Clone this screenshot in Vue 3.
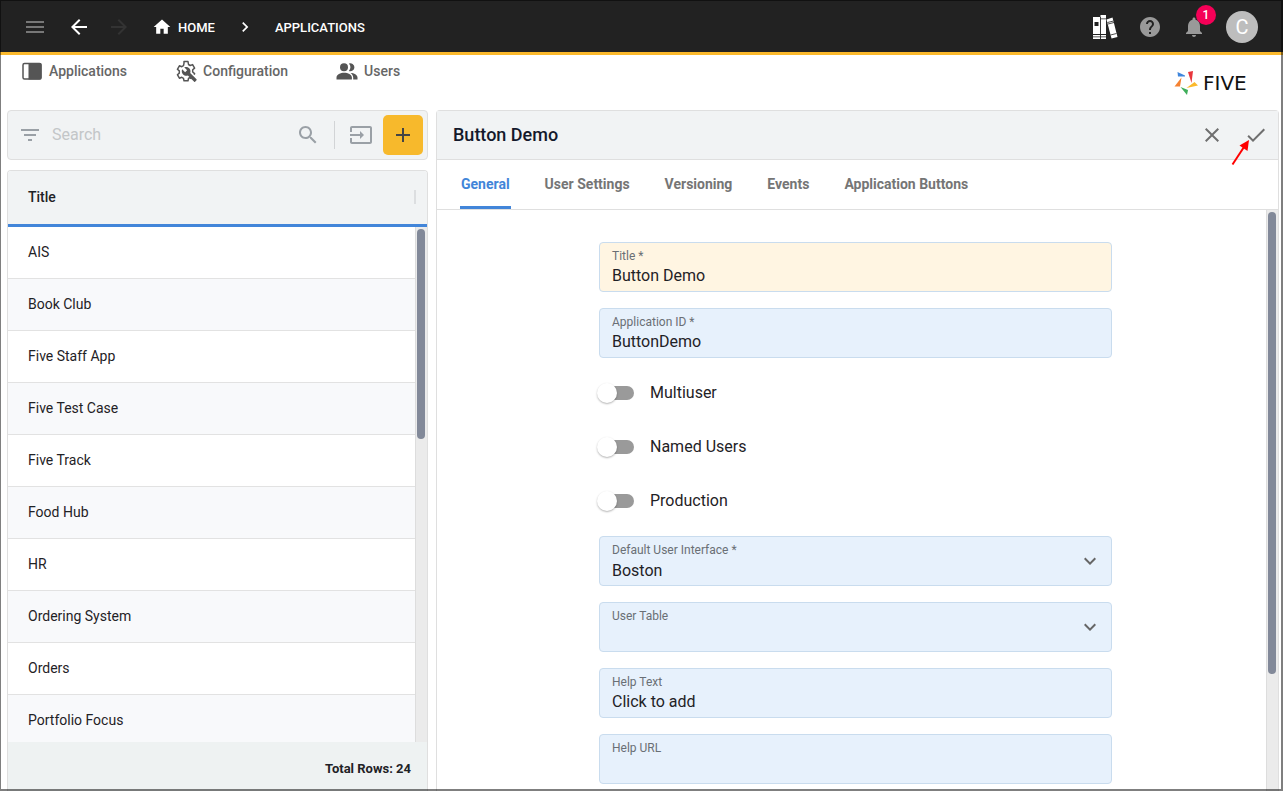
<script setup>
import { ref } from 'vue'

const apps = [
  'AIS', 'Book Club', 'Five Staff App', 'Five Test Case', 'Five Track',
  'Food Hub', 'HR', 'Ordering System', 'Orders', 'Portfolio Focus'
]
const tabs = ['General', 'User Settings', 'Versioning', 'Events', 'Application Buttons']
const activeTab = ref('General')
const search = ref('')

const fields = ref([
  { id: 'title', type: 'text', label: 'Title *', value: 'Button Demo', active: true },
  { id: 'app-id', type: 'text', label: 'Application ID *', value: 'ButtonDemo' },
  { id: 'multiuser', type: 'switch', label: 'Multiuser', value: false },
  { id: 'named-users', type: 'switch', label: 'Named Users', value: false },
  { id: 'production', type: 'switch', label: 'Production', value: false },
  { id: 'default-ui', type: 'select', label: 'Default User Interface *', value: 'Boston', options: ['Boston'] },
  { id: 'user-table', type: 'select', label: 'User Table', value: '', options: [''] },
  { id: 'help-text', type: 'text', label: 'Help Text', value: 'Click to add' },
  { id: 'help-url', type: 'text', label: 'Help URL', value: '' }
])
</script>

<template>
  <div class="app">
    <header class="topbar">
      <button class="icon-btn menu" aria-label="Menu">
        <svg viewBox="0 0 24 24"><path d="M3 18h18v-2H3v2zm0-5h18v-2H3v2zm0-7v2h18V6H3z" /></svg>
      </button>
      <button class="icon-btn back" aria-label="Back">
        <svg viewBox="0 0 24 24"><path d="M20 11H7.830l5.590-5.590L12 4l-8 8 8 8 1.410-1.410L7.830 13H20v-2z" /></svg>
      </button>
      <button class="icon-btn forward" aria-label="Forward" disabled>
        <svg viewBox="0 0 24 24"><path d="M12 4l-1.410 1.410L16.170 11H4v2h12.170l-5.580 5.590L12 20l8-8z" /></svg>
      </button>
      <nav class="crumbs" aria-label="Breadcrumb">
        <a href="#" class="crumb">
          <svg viewBox="0 0 24 24"><path d="M10 20v-6h4v6h5v-8h3L12 3 2 12h3v8z" /></svg>HOME
        </a>
        <svg class="sep" viewBox="0 0 24 24"><path d="M10 6L8.590 7.410 13.170 12l-4.580 4.590L10 18l6-6z" /></svg>
        <a href="#" class="crumb">APPLICATIONS</a>
      </nav>
      <div class="tools">
        <button class="tool" aria-label="Library">
          <svg class="books" viewBox="0 0 26 26">
            <path fill="#fff" d="M1 3h7v22H1zM8.500 1h5.500v24H8.500z" />
            <path fill="#fff" d="M14.500 5.500l6-2L25.500 23l-6 1.500z" />
            <path fill="#222" d="M2.500 8h4v4h-4zM1 20h13v1H1zM1 22.500h13v.8H1zM8 3h.8v22H8zM9 4.500h5v.8H9z" />
            <path stroke="#222" stroke-width=".8" fill="none" d="M15.500 8.500l6-1.500M18.500 21l6-1.500M16 10l6-1.500" />
          </svg>
        </button>
        <button class="tool" aria-label="Help">
          <svg viewBox="0 0 24 24"><path d="M12 2C6.480 2 2 6.480 2 12s4.480 10 10 10 10-4.480 10-10S17.520 2 12 2zm1 17h-2v-2h2v2zm2.070-7.750l-.9.920C13.450 12.900 13 13.500 13 15h-2v-.5c0-1.100.45-2.100 1.170-2.830l1.240-1.260c.37-.36.590-.86.590-1.410 0-1.100-.9-2-2-2s-2 .9-2 2H8c0-2.210 1.790-4 4-4s4 1.790 4 4c0 .88-.36 1.680-.93 2.250z" /></svg>
        </button>
        <button class="tool" aria-label="Notifications">
          <svg viewBox="0 0 24 24"><path d="M12 22c1.100 0 2-.9 2-2h-4c0 1.100.89 2 2 2zm6-6v-5c0-3.070-1.640-5.640-4.500-6.320V4c0-.83-.67-1.500-1.500-1.500s-1.500.67-1.500 1.500v.68C7.630 5.360 6 7.920 6 11v5l-2 2v1h16v-1l-2-2z" /></svg>
          <span class="badge">1</span>
        </button>
        <button class="avatar" aria-label="Account">C</button>
      </div>
    </header>

    <div class="subbar">
      <nav class="sections" aria-label="Sections">
        <a href="#">
          <svg viewBox="0 0 24 24"><rect x="3" y="4.500" width="18" height="15.500" rx="1.500" fill="none" stroke="#555" stroke-width="1.500" /><path d="M8.500 4h11.500a1.500 1.500 0 0 1 1.500 1.500v13.500a1.500 1.500 0 0 1-1.500 1.500H8.500z" /></svg>Applications
        </a>
        <a href="#">
          <svg viewBox="0 0 24 24">
            <path fill="none" stroke="#555" stroke-width="1.500" stroke-linejoin="round" d="M17.500 19.500l-2-.8-1 .6-.5 2.500h-4l-.5-2.500-1.700-1-2.400.9-2-3.500 1.900-1.600v-2.200L3.400 10.300l2-3.500 2.400.9 1.700-1L10 4.200 10 2.500h4l.5 3 1.700 1 2.400-.9 2 3.500-1.900 1.700v2.200l1.900 1.600-.5 1" />
            <path d="M22.500 20.300l-6.300-6.300c.6-1.600.3-3.500-1-4.800-1.400-1.400-3.400-1.600-5-.9l2.900 2.900-2 2-2.900-2.900c-.8 1.600-.5 3.700.9 5.100 1.300 1.300 3.200 1.600 4.800 1l6.300 6.300c.3.300.7.300.9 0l1.400-1.400c.3-.3.300-.7 0-1z" />
          </svg>Configuration
        </a>
        <a href="#">
          <svg viewBox="0 0 24 24"><circle cx="9" cy="8.300" r="4" /><path d="M13.900 4.600a4 4 0 1 1 0 7.400 5.800 5.800 0 0 0 0-7.400zM1.500 20.500v-2c0-3 4-4.700 7.700-4.700s7.700 1.700 7.700 4.700v2zM15.500 13.900c3.600.1 7 1.700 7 4.600v2h-4.300v-2c0-2-1.200-3.600-2.700-4.600z" /></svg>Users
        </a>
      </nav>
      <div class="brand">
        <svg viewBox="0 0 24 24">
          <path fill="#3f86dc" d="M3.500 1L11 4.500v1H4z" />
          <path fill="#e8363c" d="M14 1l5-1-1.500 12z" />
          <path fill="#fbb92c" d="M12.500 17l8-6 3.500 3.500z" />
          <path fill="#3fae5a" d="M6.500 16l7.500 3-1 5z" />
          <path fill="#f58232" d="M7.500 6.500L6 15.500H.500z" />
        </svg>
        <span>FIVE</span>
      </div>
    </div>

    <main class="workspace">
      <aside class="list">
        <div class="searchbar">
          <button class="plain" aria-label="Filter"><svg viewBox="0 0 24 24"><path d="M10 18h4v-2h-4v2zM3 6v2h18V6H3zm3 7h12v-2H6v2z" /></svg></button>
          <input v-model="search" type="text" placeholder="Search" aria-label="Search">
          <button class="plain" aria-label="Run search"><svg viewBox="0 0 24 24"><path d="M15.500 14h-.79l-.28-.27C15.410 12.590 16 11.110 16 9.500 16 5.910 13.090 3 9.500 3S3 5.910 3 9.500 5.910 16 9.500 16c1.610 0 3.090-.59 4.230-1.570l.27.28v.79l5 4.990L20.490 19l-4.990-5zm-6 0C7.010 14 5 11.990 5 9.500S7.010 5 9.500 5 14 7.010 14 9.500 11.990 14 9.500 14z" /></svg></button>
          <span class="divider"></span>
          <button class="plain" aria-label="Import"><svg viewBox="0 0 24 24"><path d="M21 3.010H3c-1.100 0-2 .9-2 2V9h2V4.990h18v14.030H3V15H1v4.010c0 1.100.9 1.980 2 1.980h18c1.100 0 2-.88 2-1.980v-14c0-1.110-.9-2-2-2zM11 16l4-4-4-4v3H1v2h10v3z" /></svg></button>
          <button class="add" aria-label="Add"><svg viewBox="0 0 24 24"><path d="M19 13h-6v6h-2v-6H5v-2h6V5h2v6h6v2z" /></svg></button>
        </div>
        <section class="grid-card">
          <div class="grid-body">
            <table>
              <thead><tr><th scope="col"><div class="head-cell">Title<span class="grip"></span></div></th></tr></thead>
              <tbody><tr v-for="name in apps" :key="name"><td>{{ name }}</td></tr></tbody>
            </table>
            <div class="track list-track"><div class="thumb"></div></div>
          </div>
          <footer>Total Rows: 24</footer>
        </section>
      </aside>

      <section class="detail">
        <div class="detail-head">
          <h1>Button Demo</h1>
          <button class="plain" aria-label="Cancel"><svg viewBox="0 0 24 24"><path d="M19 6.410L17.590 5 12 10.590 6.410 5 5 6.410 10.590 12 5 17.590 6.410 19 12 13.410 17.590 19 19 17.590 13.410 12z" /></svg></button>
          <button class="plain save" aria-label="Save">
            <svg viewBox="0 0 24 24"><path d="M9 16.170L4.830 12l-1.420 1.410L9 19 21 7l-1.410-1.410z" /></svg>
            <svg class="pointer" viewBox="0 0 20 27"><path d="M1.500 25.500L13 8" stroke="#f00" stroke-width="2" fill="none" /><path d="M18 1l-1.500 11L8.500 6.500z" fill="#f00" /></svg>
          </button>
        </div>
        <div class="tabs" role="tablist">
          <button v-for="tab in tabs" :key="tab" role="tab" :aria-selected="tab === activeTab" :class="{ on: tab === activeTab }" @click="activeTab = tab">{{ tab }}</button>
        </div>
        <div class="detail-body">
          <form @submit.prevent>
            <template v-for="f in fields" :key="f.id">
              <div v-if="f.type === 'switch'" class="switch">
                <input :id="f.id" v-model="f.value" type="checkbox" role="switch">
                <label :for="f.id">{{ f.label }}</label>
              </div>
              <div v-else class="field" :class="{ active: f.active }">
                <label :for="f.id">{{ f.label }}</label>
                <input v-if="f.type === 'text'" :id="f.id" v-model="f.value" type="text">
                <template v-else>
                  <select :id="f.id" v-model="f.value"><option v-for="o in f.options" :key="o" :value="o">{{ o }}</option></select>
                  <svg class="caret" viewBox="0 0 24 24"><path d="M7.410 8.590L12 13.170l4.590-4.580L18 10l-6 6-6-6z" /></svg>
                </template>
              </div>
            </template>
          </form>
          <div class="track form-track"><div class="thumb"></div></div>
        </div>
      </section>
    </main>
  </div>
</template>

<style>
body { margin: 0; }
</style>

<style scoped>
* { box-sizing: border-box; }
.app {
  position: relative; display: flex; flex-direction: column;
  height: 100vh; overflow: hidden; background: #fff; color: #1f2226;
  font-family: Roboto, "Liberation Sans", sans-serif; font-size: 14px;
}
.app::after {
  content: ""; position: absolute; inset: 0; pointer-events: none;
  border: 1px solid rgba(0, 0, 0, .5); border-right-width: 2px; border-bottom-width: 2px;
}
button, input, select { font: inherit; color: inherit; margin: 0; padding: 0; border: 0; background: none; outline: 0; }
button { cursor: pointer; }
a { color: inherit; text-decoration: none; }
svg { display: block; width: 24px; height: 24px; fill: currentColor; flex: none; }

.topbar {
  display: flex; align-items: center; flex: none; height: 55px; padding: 2px 26px 0 15px;
  background: #222; border-bottom: 3px solid #fbb92c; color: #fff;
}
.icon-btn { display: grid; place-items: center; width: 40px; height: 40px; }
.menu { color: #777; margin-right: 4px; }
.forward { color: #333; }
.crumbs { display: flex; align-items: center; margin-left: 13px; font-weight: 500; font-size: 13px; }
.crumb { display: flex; align-items: center; gap: 6px; }
.crumb svg { width: 20px; height: 20px; }
.sep { width: 20px; height: 20px; margin: 0 20px; }
.tools { display: flex; align-items: center; gap: 20px; margin-left: auto; color: #999; }
.tool { position: relative; }
.tool .books { width: 26px; height: 26px; }
.badge {
  position: absolute; left: 14px; top: -10px; width: 20px; height: 20px; border-radius: 50%;
  background: #f50057; color: #fff; font-size: 12px; line-height: 20px; font-weight: 500;
}
.avatar { width: 32px; height: 32px; margin-right: -1px; border-radius: 50%; background: #bdbdbd; color: #fff; font-size: 20px; }

.subbar { display: flex; justify-content: space-between; flex: none; height: 55px; padding: 0 20px; }
.sections { display: flex; align-items: center; gap: 47px; height: 32px; color: #666; font-weight: 500; }
.sections a { display: flex; align-items: center; gap: 5px; }
.sections svg { color: #555; }
.brand { display: flex; align-items: center; gap: 5px; height: 55px; color: #111; }
.brand span { min-width: 60px; font-family: "DejaVu Sans", sans-serif; font-size: 20px; }

.workspace { display: flex; flex: 1; min-height: 0; gap: 8px; padding: 0 4px 0 7px; }
.list { display: flex; flex-direction: column; gap: 10px; flex: 0 0 421px; min-height: 0; }
.searchbar {
  display: flex; align-items: center; flex: none; height: 50px; padding: 0 4px 0 10px;
  background: #f1f3f4; border: 1px solid #dfdfdf; border-radius: 4px; color: #9aa0a6;
}
.searchbar input { flex: 1; min-width: 0; margin-left: 10px; padding-bottom: 2px; font-size: 16px; color: #333; }
.searchbar input::placeholder { color: #c3c6c8; opacity: 1; }
.divider { width: 1px; height: 28px; margin: 0 14px; background: #d2d4d6; }
.add { display: grid; place-items: center; width: 40px; height: 40px; margin-left: 10px; border-radius: 5px; background: #f7b92c; color: #444; }
.grid-card { display: flex; flex-direction: column; flex: 1; min-height: 0; border: 1px solid #dfdfdf; border-bottom: 0; border-radius: 4px 4px 0 0; overflow: hidden; }
.grid-body { position: relative; flex: 1; min-height: 0; overflow: hidden; }
table { width: 100%; border-collapse: separate; border-spacing: 0; }
th { height: 56px; padding: 0 11px 2px 20px; text-align: left; font-weight: 500; background: #f1f3f4; border-bottom: 3px solid #4285d9; }
.head-cell { display: flex; align-items: center; justify-content: space-between; }
.grip { width: 2px; height: 14px; background: #dcdee0; }
td { height: 52px; padding: 0 20px 2px; border-bottom: 1px solid #e2e2e2; }
tbody tr:nth-child(even) { background: #f8f9fb; }
footer { flex: none; height: 49px; padding: 5px 16px 0 0; background: #eef2f2; text-align: right; font-size: 13px; font-weight: 700; line-height: 44px; }
.track { position: absolute; right: 0; bottom: 0; width: 12px; padding: 2px 1px; background: #ebebeb; border-left: 1px solid #ddd; }
.list-track { top: 56px; }
.form-track { top: 0; }
.thumb { width: 8px; height: 41%; border-radius: 4px; background: #828999; }
.form-track .thumb { height: 80%; }

.detail { display: flex; flex-direction: column; flex: 1; min-width: 0; border: 1px solid #dfdfdf; border-bottom: 0; border-radius: 4px 4px 0 0; }
.detail-head { display: flex; align-items: center; gap: 20px; flex: none; height: 49px; padding: 0 10px 0 16px; background: #f1f3f4; border-bottom: 1px solid #dfdfdf; color: #6f6f6f; }
h1 { flex: 1; margin: 0; padding-bottom: 2px; font-size: 18px; font-weight: 500; color: #14192b; }
.save { position: relative; }
.pointer { position: absolute; left: -13px; top: 16px; width: 20px; height: 27px; }
.tabs { display: flex; gap: 33px; flex: none; height: 50px; padding: 0 23px; border-bottom: 1px solid #dfdfdf; color: #757575; }
.tabs button { padding: 2px 1px 0; font-weight: 700; border-bottom: 3px solid transparent; }
.tabs .on { color: #4285d9; border-color: #4285d9; }
.detail-body { position: relative; flex: 1; min-height: 0; overflow: hidden; padding: 32px 12px 0 8px; }
form { display: flex; flex-direction: column; gap: 16px; max-width: 513px; margin: 0 auto; }
.field { position: relative; display: flex; flex-direction: column; flex: none; height: 50px; padding: 5px 12px 0; background: #e7f1fc; border: 1px solid #c9dcee; border-radius: 4px; }
.field.active { background: #fff5e2; }
.field label { font-size: 12px; line-height: 16px; color: #6a6f75; }
.field input, .field select { width: 100%; height: 24px; font-size: 16px; line-height: 24px; }
.field select { height: 26px; line-height: 26px; appearance: none; }
.caret { position: absolute; right: 9px; top: 12px; color: #666; pointer-events: none; }
.switch { display: flex; align-items: center; gap: 16px; height: 38px; font-size: 16px; }
.switch label { padding-bottom: 2px; }
.switch input { appearance: none; position: relative; width: 34px; height: 14px; margin-left: 1px; border-radius: 7px; background: #9a9a9a; }
.switch input::before { content: ""; position: absolute; left: -3px; top: -3px; width: 20px; height: 20px; border-radius: 50%; background: #fff; box-shadow: 0 1px 2px rgba(0, 0, 0, .3); }
.switch input:checked::before { left: 17px; }
</style>
